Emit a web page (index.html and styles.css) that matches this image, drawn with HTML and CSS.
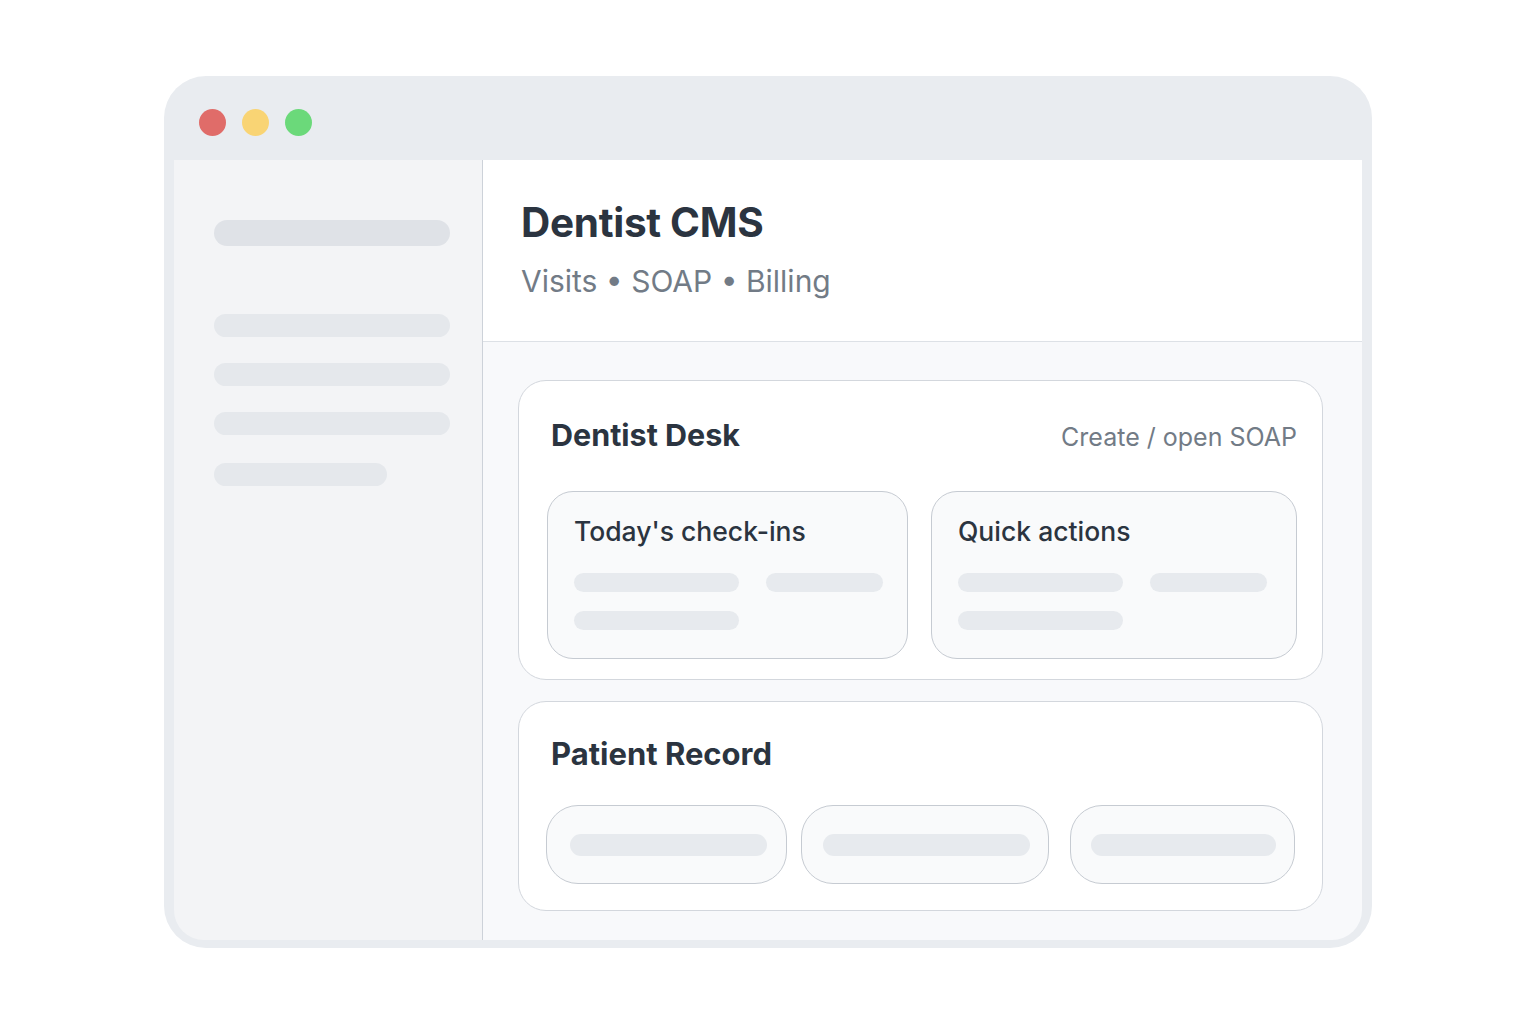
FILE: index.html
```html
<!DOCTYPE html>
<html lang="en">
<head>
<meta charset="utf-8">
<title>Dentist CMS</title>
<link rel="stylesheet" href="styles.css">
</head>
<body>
<div class="window">
  <div class="titlebar">
    <span class="dot red"></span>
    <span class="dot yellow"></span>
    <span class="dot green"></span>
  </div>
  <div class="inner">
    <aside class="sidebar">
      <div class="sb-bar sb-top"></div>
      <div class="sb-list">
        <div class="sb-bar"></div>
        <div class="sb-bar"></div>
        <div class="sb-bar"></div>
        <div class="sb-bar sb-short"></div>
      </div>
    </aside>
    <main class="main">
      <header class="header">
        <h1 class="title">Dentist CMS</h1>
        <p class="subtitle">Visits • SOAP • Billing</p>
      </header>
      <div class="content">
        <section class="card desk">
          <div class="card-head">
            <h2 class="card-title">Dentist Desk</h2>
            <span class="card-link">Create / open SOAP</span>
          </div>
          <div class="panels">
            <div class="panel">
              <h3 class="panel-title">Today's check-ins</h3>
              <div class="panel-bars">
                <span class="pbar long"></span>
                <span class="pbar short"></span>
                <span class="pbar long"></span>
              </div>
            </div>
            <div class="panel">
              <h3 class="panel-title">Quick actions</h3>
              <div class="panel-bars">
                <span class="pbar long"></span>
                <span class="pbar short"></span>
                <span class="pbar long"></span>
              </div>
            </div>
          </div>
        </section>
        <section class="card record">
          <h2 class="card-title">Patient Record</h2>
          <div class="pills">
            <div class="pill p1"><span class="pill-bar"></span></div>
            <div class="pill p2"><span class="pill-bar"></span></div>
            <div class="pill p3"><span class="pill-bar"></span></div>
          </div>
        </section>
      </div>
    </main>
  </div>
</div>
</body>
</html>
```
FILE: styles.css
```css
* { box-sizing: border-box; }
html, body { margin: 0; padding: 0; background: #ffffff; }
body {
  font-family: Inter, "Noto Sans", "Liberation Sans", sans-serif;
  color: #2b3440;
  width: 1536px;
  height: 1024px;
  overflow: hidden;
}
.window {
  margin: 76px 0 0 164px;
  width: 1208px;
  height: 872px;
  background: #e9ecf0;
  border-radius: 42px;
  padding: 0 10px 8px 10px;
  display: flex;
  flex-direction: column;
}
.titlebar {
  height: 84px;
  flex: none;
  display: flex;
  align-items: center;
  gap: 16px;
  padding-left: 25px;
  padding-top: 8px;
}
.dot { width: 27px; height: 27px; border-radius: 50%; display: block; }
.red { background: #e06c69; }
.yellow { background: #f9d474; }
.green { background: #6bd97a; }
.inner {
  flex: 1;
  display: grid;
  grid-template-columns: 309px minmax(0, 1fr);
  border-radius: 0 0 30px 30px;
  overflow: hidden;
}
.sidebar {
  background: #f3f4f6;
  border-right: 1px solid #cdd2d9;
  padding: 60px 0 0 40px;
}
.sb-bar {
  width: 236px;
  height: 23px;
  border-radius: 12px;
  background: #e5e8ec;
}
.sb-top { height: 26px; background: #dfe2e7; border-radius: 13px; margin-bottom: 68px; }
.sb-list { display: flex; flex-direction: column; gap: 26px; }
.sb-short { width: 173px; margin-top: 2px; }
.main { background: #f8f9fb; display: flex; flex-direction: column; min-width: 0; }
.header {
  background: #ffffff;
  height: 182px;
  border-bottom: 1px solid #dde1e6;
  padding: 38px 0 0 38px;
}
.title {
  margin: 0;
  font-size: 40.5px;
  font-weight: 700;
  line-height: 50px;
  color: #2b3440;
  letter-spacing: -0.3px;
}
.subtitle {
  margin: 13px 0 0 0;
  font-size: 30px;
  line-height: 40px;
  color: #727b86;
  font-weight: 400;
}
.content {
  padding: 38px 39px 0 35px;
  display: flex;
  flex-direction: column;
  gap: 21px;
}
.card {
  background: #ffffff;
  border: 1.5px solid #d3d7dd;
  border-radius: 28px;
}
.desk { height: 300px; padding: 34px 25px 0 28px; }
.card-head {
  display: flex;
  justify-content: space-between;
  align-items: baseline;
  padding-left: 4px;
}
.card-title {
  margin: 0;
  font-size: 30.5px;
  line-height: 40px;
  font-weight: 700;
  color: #2b3440;
}
.card-link { font-size: 25px; color: #727b86; }
.panels {
  margin-top: 36px;
  display: grid;
  grid-template-columns: 361px 366px;
  justify-content: space-between;
}
.panel {
  height: 168px;
  background: #f9fafb;
  border: 1.5px solid #c6cbd2;
  border-radius: 26px;
  padding: 20px 0 0 26px;
}
.panel-title {
  margin: 0;
  font-size: 26.5px;
  line-height: 38px;
  font-weight: 500;
  color: #2b3440;
}
.panel-bars {
  margin-top: 23px;
  display: grid;
  grid-template-columns: 165px 117px;
  column-gap: 27px;
  row-gap: 19px;
}
.pbar { height: 19px; border-radius: 10px; background: #e7eaee; display: block; }
.record { height: 210px; padding: 32px 26px 0 27px; }
.record .card-title { padding-left: 5px; font-size: 31px; }
.pills {
  margin-top: 31px;
  display: flex;
}
.pill {
  flex: none;
  height: 79px;
  background: #f9fafb;
  border: 1.5px solid #c6cbd2;
  border-radius: 32px;
  display: flex;
  align-items: center;
}
.pill-bar { height: 22px; border-radius: 11px; background: #e7eaee; display: block; }
.p1 { width: 241px; padding-left: 23px; }
.p1 .pill-bar { width: 197px; }
.p2 { width: 248px; margin-left: 14px; padding-left: 21px; }
.p2 .pill-bar { width: 207px; }
.p3 { width: 225px; margin-left: 21px; padding-left: 20px; }
.p3 .pill-bar { width: 185px; }
```
